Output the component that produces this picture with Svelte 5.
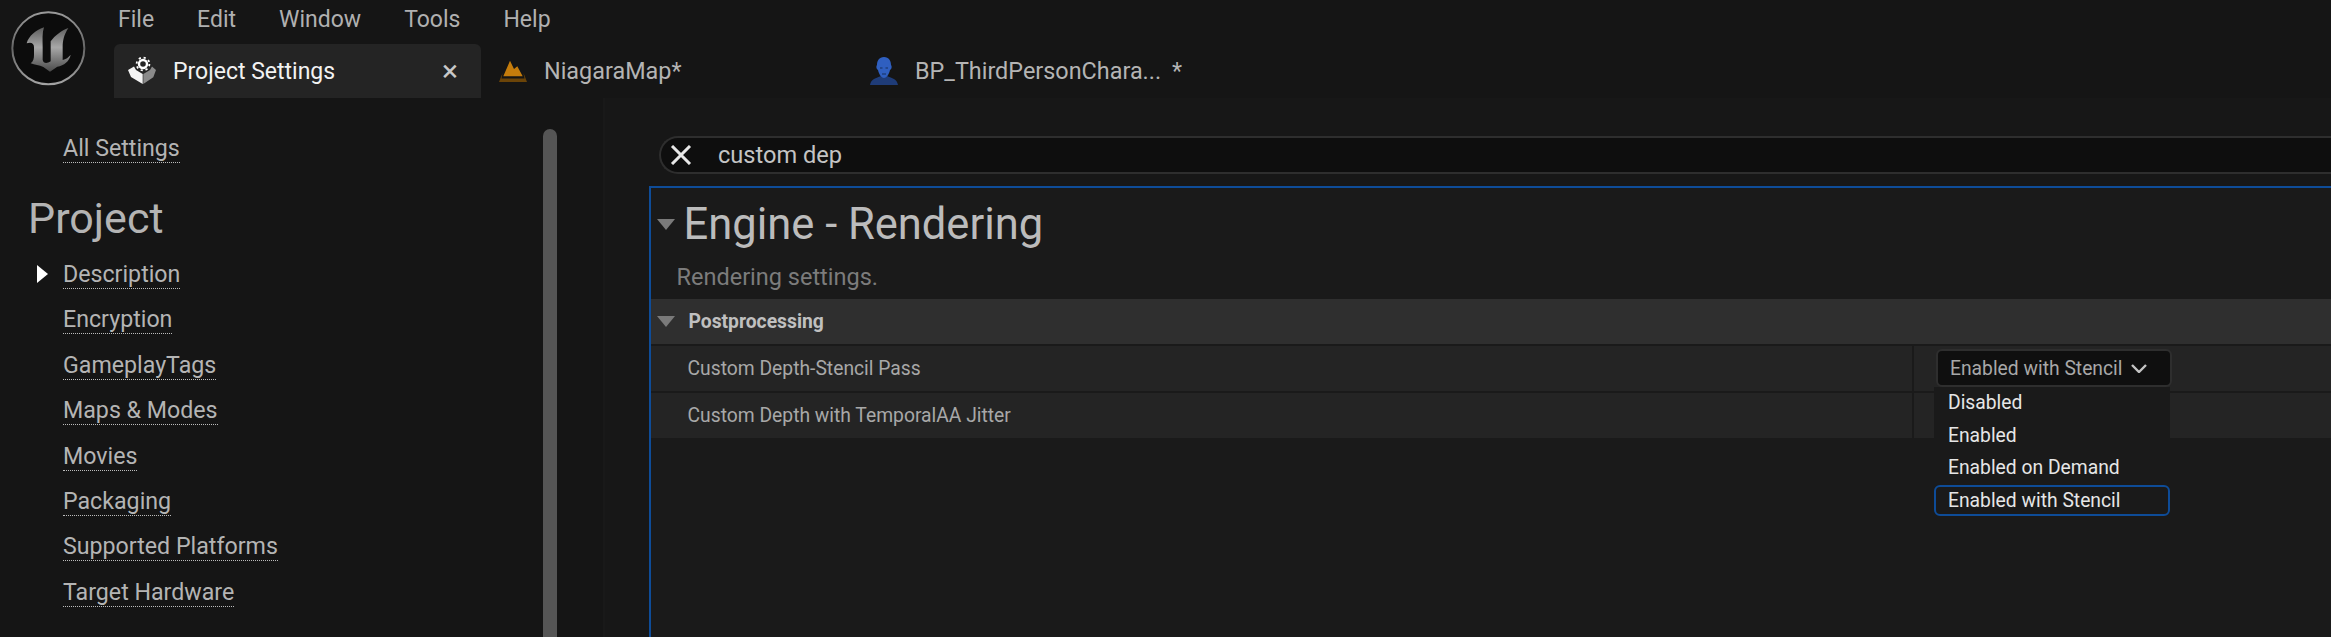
<script lang="ts">
	const menus = ['File', 'Edit', 'Window', 'Tools', 'Help'];
	const projectLinks = [
		'Description',
		'Encryption',
		'GameplayTags',
		'Maps & Modes',
		'Movies',
		'Packaging',
		'Supported Platforms',
		'Target Hardware'
	];
	const depthOptions = ['Disabled', 'Enabled', 'Enabled on Demand', 'Enabled with Stencil'];
	let selected = 'Enabled with Stencil';
</script>

<div class="editor">
	<header class="top">
		<svg class="logo" viewBox="0 0 288 288" aria-label="Unreal Engine">
			<defs>
				<linearGradient id="ring" x1="0" y1="0" x2="0" y2="1">
					<stop offset="0" stop-color="#9a9a9a" />
					<stop offset="0.5" stop-color="#666" />
					<stop offset="1" stop-color="#a4a4a4" />
				</linearGradient>
				<linearGradient id="mark" x1="0" y1="0" x2="0" y2="1">
					<stop offset="0" stop-color="#5c5c5c" />
					<stop offset="0.45" stop-color="#a8a8a8" />
					<stop offset="1" stop-color="#4a4a4a" />
				</linearGradient>
			</defs>
			<circle cx="145" cy="145" r="108" fill="#0c0c0c" stroke="url(#ring)" stroke-width="6" />
			<path
				fill="url(#mark)"
				d="M80 130 C86 108 106 92 132 82 C126 100 128 120 128 140 L128 180 C130 190 140 192 152 184 L152 124 C165 106 184 92 205 84 C192 104 188 122 188 140 L188 180 C197 178 206 172 212 164 C208 184 192 196 172 200 L150 215 L130 201 C118 196 104 194 92 190 C100 184 102 176 102 164 L102 142 C102 130 94 126 80 130 Z"
			/>
		</svg>
		<div class="top-stack">
			<nav class="menubar">
				{#each menus as menu}
					<span class="menu">{menu}</span>
				{/each}
			</nav>
			<div class="tabs">
				<div class="tab active">
					<svg class="tab-icon settings" viewBox="0 0 30 30">
						<circle cx="16" cy="8" r="4" fill="none" stroke="#fff" stroke-width="2.4" />
						<circle cx="16" cy="8" r="6.4" fill="none" stroke="#fff" stroke-width="1.8" stroke-dasharray="2.2 2.8" />
						<path fill="#f4f4f4" d="M1 14 L7 10.5 L9 14 L15.7 18 V28 L4 21 Z" />
						<path fill="#8a8a8a" d="M16.3 18 L23 14 L25 10.5 L29 14 L26.3 21.3 L16.3 28 Z" />
					</svg>
					<span class="tab-label">Project Settings</span>
					<span class="close">×</span>
				</div>
				<div class="tab">
					<svg class="tab-icon" viewBox="0 0 28 24">
						<path fill="#c47c0c" d="M4.3 17.3 L11 1.7 L15 10 L18.3 7.3 L23.7 17.3 Z" />
						<path fill="#6b4408" d="M3.5 14 L0 23 H28 L24.5 14 L25.5 19.5 H2.5 Z" />
					</svg>
					<span class="tab-label">NiagaraMap*</span>
				</div>
				<div class="tab">
					<svg class="tab-icon" viewBox="0 0 28 28">
						<path fill="#1f3c78" d="M0 28 C1 22 6 21 11 19 H17 C22 21 27 22 28 28 Z" />
						<path fill="#2f5fc0" d="M14 0 C19 0 21 4 21 8 C22 9 22 12 20 13 C19 18 16 21 14 21 C12 21 9 18 8 13 C6 12 6 9 7 8 C7 4 9 0 14 0 Z" />
						<path fill="none" stroke="#17305f" stroke-width="1" d="M10 11 H12.5 M15.5 11 H18 M12 17 H16" />
					</svg>
					<span class="tab-label long">BP_ThirdPersonChara...</span>
					<span class="dirty">*</span>
				</div>
			</div>
		</div>
	</header>

	<div class="body">
		<aside class="sidebar">
			<div class="side-nav">
				<a class="link all" href="#all">All Settings</a>
				<h2>Project</h2>
				<ul>
					{#each projectLinks as link, i}
						<li>
							{#if i === 0}<span class="marker"></span>{/if}
							<a class="link" href="#item">{link}</a>
						</li>
					{/each}
				</ul>
			</div>
			<div class="scrollbar"></div>
		</aside>

		<main class="content">
			<div class="search">
				<svg class="clear" viewBox="0 0 22 20">
					<path d="M2 1 L20 19 M20 1 L2 19" stroke="#e8e8e8" stroke-width="3" fill="none" />
				</svg>
				<span class="query">custom dep</span>
			</div>

			<section class="panel">
				<div class="title">
					<span class="tri big"></span>
					<h1>Engine - Rendering</h1>
				</div>
				<p class="desc">Rendering settings.</p>
				<div class="group">
					<span class="tri"></span>
					<strong>Postprocessing</strong>
				</div>
				<div class="row">
					<div class="name">Custom Depth-Stencil Pass</div>
					<div class="value">
						<div class="combo">
							<button class="combo-btn" type="button">
								<span>{selected}</span>
								<svg viewBox="0 0 16 9" width="16" height="9">
									<path d="M1 1 L8 8 L15 1" fill="none" stroke="#c4c4c4" stroke-width="2.4" />
								</svg>
							</button>
							<ul class="options">
								{#each depthOptions as option}
									<li class:current={option === selected}>{option}</li>
								{/each}
							</ul>
						</div>
					</div>
				</div>
				<div class="row">
					<div class="name">Custom Depth with TemporalAA Jitter</div>
					<div class="value"></div>
				</div>
			</section>
		</main>
	</div>
</div>

<style>
	:global(body) {
		margin: 0;
		background: #151515;
	}

	.editor {
		width: 2331px;
		height: 637px;
		overflow: hidden;
		background: #151515;
		font-family: Roboto, 'Liberation Sans', sans-serif;
		display: flex;
		flex-direction: column;
	}

	.top {
		height: 98px;
		display: flex;
		flex: none;
	}

	.logo {
		width: 96px;
		height: 96px;
		flex: none;
	}

	.top-stack {
		margin-left: 18px;
		display: flex;
		flex-direction: column;
	}

	.menubar {
		height: 44px;
		box-sizing: border-box;
		padding: 0 0 5px 4px;
		display: flex;
		align-items: center;
		gap: 43px;
		font-size: 23px;
		color: #b0b0b0;
	}

	.tabs {
		display: flex;
		gap: 4px;
		height: 54px;
	}

	.tab {
		width: 367px;
		box-sizing: border-box;
		padding-left: 14px;
		display: flex;
		align-items: center;
		color: #b4b4b4;
		font-size: 23.4px;
		border-radius: 6px 6px 0 0;
	}

	.tab.active {
		background: #242424;
		color: #f2f2f2;
		font-size: 23px;
		padding-left: 13px;
	}

	.tab-icon {
		width: 28px;
		height: 24px;
		margin-right: 17px;
		flex: none;
	}

	.tab-icon.settings {
		width: 30px;
		height: 30px;
		margin-right: 16px;
	}

	.tab:last-child .tab-icon {
		height: 28px;
	}

	.close {
		margin-left: auto;
		margin-right: 23px;
		font-size: 30px;
		line-height: 1;
		color: #c8c8c8;
	}

	.dirty {
		margin-left: 11px;
	}

	.body {
		flex: 1;
		display: flex;
		min-height: 0;
	}

	.sidebar {
		width: 605px;
		flex: none;
		display: flex;
		box-sizing: border-box;
		border-right: 2px solid #191919;
	}

	.side-nav {
		width: 543px;
		flex: none;
		box-sizing: border-box;
		padding: 36px 0 0 28px;
	}

	.link {
		display: inline-block;
		font-size: 23.2px;
		line-height: 28px;
		color: #b4b4b4;
		text-decoration: none;
		border-bottom: 1px dotted #bcbcbc;
	}

	.all {
		margin-left: 35px;
	}

	h2 {
		margin: 30px 0 0;
		font-size: 43px;
		font-weight: 400;
		line-height: 50px;
		color: #b4b4b4;
	}

	ul {
		list-style: none;
		margin: 0;
		padding: 0;
	}

	.side-nav ul {
		margin-top: 17px;
	}

	.side-nav li {
		height: 45.4px;
		padding-left: 35px;
		position: relative;
	}

	.marker {
		position: absolute;
		left: 9px;
		top: 5px;
		border-left: 11px solid #fff;
		border-top: 9px solid transparent;
		border-bottom: 9px solid transparent;
	}

	.scrollbar {
		width: 14px;
		height: 600px;
		margin-top: 31px;
		background: #555;
		border-radius: 7px;
	}

	.content {
		flex: 1;
		min-width: 0;
		background: #171717;
		padding-top: 38px;
	}

	.search {
		height: 38px;
		margin-left: 54px;
		border: 2px solid #2e2e2e;
		border-right: 0;
		border-radius: 20px 0 0 20px;
		box-sizing: border-box;
		background: #0e0e0e;
		display: flex;
		align-items: center;
		color: #c4c4c4;
		font-size: 23.6px;
	}

	.clear {
		width: 22px;
		height: 20px;
		margin-left: 9px;
		flex: none;
	}

	.query {
		margin-left: 26px;
	}

	.panel {
		margin: 12px 0 0 43.5px;
		border-top: 2px solid #0e4c98;
		border-left: 2px solid #0e4c98;
		background: #1a1a1a;
		height: 500px;
	}

	.title {
		display: flex;
		align-items: center;
		height: 70px;
		padding-top: 2px;
		box-sizing: border-box;
		padding-left: 6px;
	}

	.tri {
		width: 0;
		height: 0;
		border-left: 9px solid transparent;
		border-right: 9px solid transparent;
		border-top: 11px solid #7a7a7a;
		flex: none;
	}

	h1 {
		margin: 0 0 0 9px;
		font-size: 43.5px;
		font-weight: 400;
		color: #bcbcbc;
	}

	.desc {
		margin: 0;
		height: 41px;
		padding-left: 26px;
		font-size: 23.5px;
		line-height: 38px;
		color: #7c7c7c;
	}

	.group {
		height: 45px;
		background: #2f2f2f;
		display: flex;
		align-items: center;
		padding-left: 6px;
		margin-bottom: 2px;
		font-size: 19.3px;
		color: #c0c0c0;
	}

	.group strong {
		margin-left: 14px;
	}

	.row {
		display: flex;
		height: 45px;
		margin-bottom: 2px;
		background: #242424;
		font-size: 19.3px;
		color: #a8a8a8;
	}

	.name {
		width: 1263.5px;
		flex: none;
		box-sizing: border-box;
		padding-left: 37px;
		line-height: 45px;
		border-right: 2px solid #1a1a1a;
	}

	.value {
		flex: 1;
		position: relative;
	}

	.combo {
		position: absolute;
		left: 22px;
		top: 3px;
		width: 236px;
		z-index: 1;
	}

	.combo-btn {
		width: 100%;
		height: 38px;
		box-sizing: border-box;
		background: #0f0f0f;
		border: 2px solid #2e2e2e;
		border-radius: 6px;
		color: #a8a8a8;
		font: inherit;
		padding: 0 0 0 12px;
		display: flex;
		align-items: center;
		gap: 9px;
	}

	.options {
		margin-left: -2px;
		width: 236px;
		background: #1a1a1a;
		color: #e6e6e6;
	}

	.options li {
		height: 31px;
		line-height: 31px;
		margin-bottom: 1.6px;
		box-sizing: border-box;
		padding-left: 14px;
	}

	.options li.current {
		border: 2px solid #0e4c98;
		border-radius: 6px;
		padding-left: 12px;
		line-height: 27px;
	}
</style>
